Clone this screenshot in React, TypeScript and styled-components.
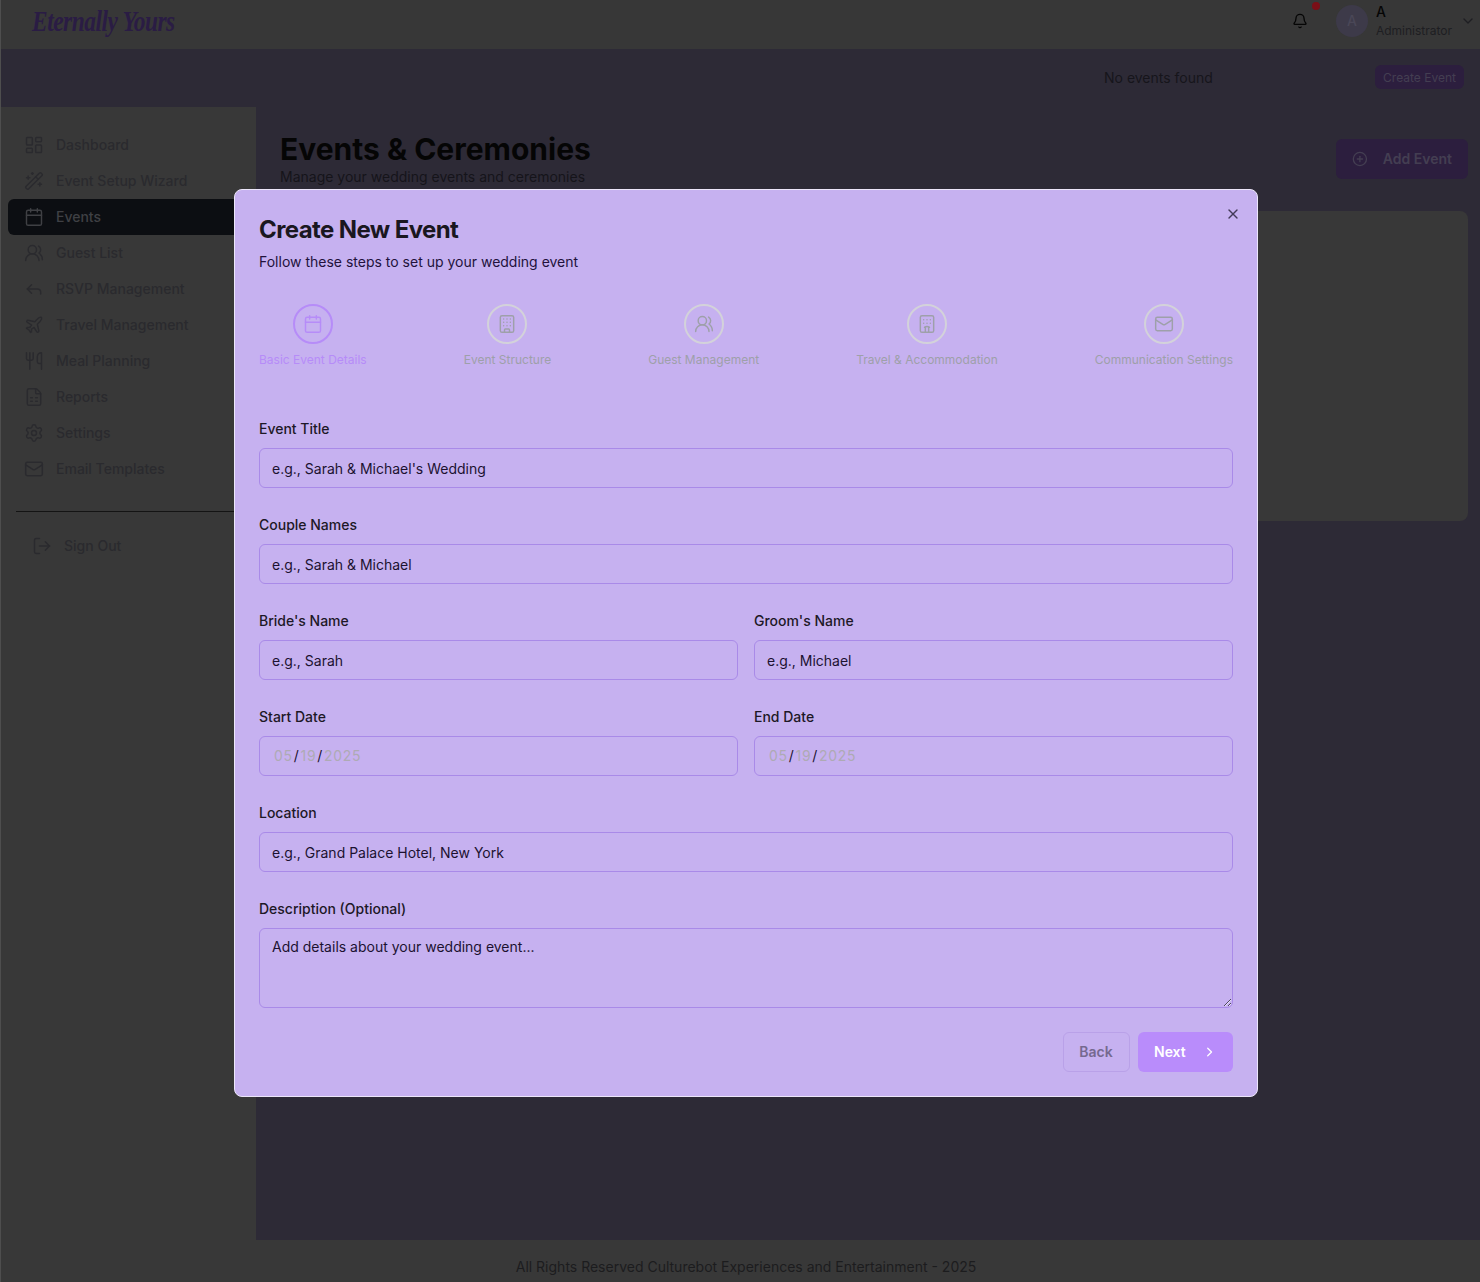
import React, { FC } from 'react';
import styled, { createGlobalStyle } from 'styled-components';
import {
  Bell,
  Building,
  Calendar,
  ChevronDown,
  ChevronRight,
  CirclePlus,
  FileSpreadsheet,
  Hotel,
  LayoutDashboard,
  LogOut,
  Mail,
  Plane,
  Reply,
  Settings,
  UsersRound,
  Utensils,
  WandSparkles,
  X,
} from 'lucide-react';

const GlobalStyle = createGlobalStyle`
  html, body {
    margin: 0;
    padding: 0;
    background: #2d2a36;
    font-family: Inter, "Liberation Sans", sans-serif;
  }
  * {
    box-sizing: border-box;
  }
`;

const Page = styled.div`
  position: relative;
  display: flex;
  flex-direction: column;
  width: 1480px;
  height: 1282px;
  overflow: hidden;
  background: #2d2a36;
  border-left: 1px solid #4e4e4e;
`;

const Header = styled.header`
  display: flex;
  align-items: center;
  height: 49px;
  flex-shrink: 0;
  background: #373737;
  padding: 0 4px 8px 31px;
`;

const LogoSlot = styled.div`
  flex: 1;
`;

const Logo = styled.div`
  font-family: "Liberation Serif", serif;
  font-style: italic;
  font-weight: 700;
  font-size: 30px;
  letter-spacing: -0.6px;
  color: #2a1c44;
  width: max-content;
  transform: scaleX(0.78);
  transform-origin: left center;
`;

const BellWrap = styled.div`
  position: relative;
  display: flex;
  color: #050505;
  margin-right: 28px;
`;

const Dot = styled.span`
  position: absolute;
  top: -11px;
  right: -12px;
  width: 8px;
  height: 8px;
  border-radius: 50%;
  background: #7a0f17;
`;

const Avatar = styled.div`
  width: 32px;
  height: 32px;
  border-radius: 50%;
  background: #3d3a49;
  color: #4a4757;
  font-size: 14px;
  font-weight: 500;
  display: flex;
  align-items: center;
  justify-content: center;
`;

const UserInfo = styled.div`
  display: flex;
  flex-direction: column;
  margin-left: 8px;
  margin-right: 8px;
`;

const UserName = styled.span`
  font-size: 14px;
  line-height: 18px;
  font-weight: 500;
  color: #050505;
`;

const UserRole = styled.span`
  font-size: 12px;
  line-height: 16px;
  margin-top: 2px;
  color: #1e1e22;
`;

const ChevronWrap = styled.div`
  display: flex;
  color: #1e1e22;
`;

const TopBand = styled.div`
  display: flex;
  align-items: center;
  height: 58px;
  flex-shrink: 0;
  padding: 0 16px 2px 0;
`;

const NoEvents = styled.span`
  font-size: 14px;
  color: #16151b;
  margin-left: 1103px;
  margin-right: auto;
`;

const SmallButton = styled.button`
  height: 24px;
  width: 89px;
  padding: 0;
  border: none;
  border-radius: 6px;
  background: #2c1e3e;
  color: #443e52;
  font-family: inherit;
  font-size: 12px;
`;

const Body = styled.div`
  display: flex;
  flex: 1;
  min-height: 0;
`;

const Sidebar = styled.nav`
  width: 255px;
  flex-shrink: 0;
  background: #383838;
  padding: 20px 8px 20px 7px;
`;

const NavItem = styled.div<{ $active?: boolean }>`
  display: flex;
  align-items: center;
  gap: 12px;
  height: 36px;
  padding-left: 16px;
  border-radius: 6px;
  font-size: 14px;
  font-weight: 500;
  color: ${(p) => (p.$active ? '#3f4044' : '#2a2a2e')};
  background: ${(p) => (p.$active ? '#0c0e12' : 'transparent')};
`;

const NavLabel = styled.span`
  padding-bottom: 2px;
`;

const Divider = styled.hr`
  height: 1px;
  border: none;
  background: #141414;
  margin: 24px 0 16px 8px;
`;

const SignOut = styled(NavItem)`
  padding-left: 24px;
`;

const Main = styled.main`
  flex: 1;
  padding: 24px 12px 0 24px;
`;

const MainHead = styled.div`
  display: flex;
  justify-content: space-between;
  align-items: flex-start;
`;

const PageTitle = styled.h1`
  margin: 0;
  font-size: 30px;
  line-height: 36px;
  font-weight: 700;
  color: #050505;
`;

const PageSub = styled.p`
  margin: 0;
  font-size: 14px;
  line-height: 20px;
  color: #15141a;
`;

const AddButton = styled.button`
  display: flex;
  align-items: center;
  gap: 15px;
  width: 132px;
  height: 40px;
  margin-top: 8px;
  padding: 0 16px 1px;
  border: none;
  border-radius: 6px;
  background: #2c1e3e;
  color: #443e52;
  font-family: inherit;
  font-size: 14px;
  font-weight: 600;
  white-space: nowrap;
`;

const EmptyCard = styled.div`
  height: 310px;
  margin-top: 24px;
  border-radius: 8px;
  background: #383838;
`;

const Footer = styled.footer`
  height: 42px;
  flex-shrink: 0;
  background: #383838;
  display: flex;
  align-items: flex-end;
  justify-content: center;
  padding: 0 0 5px 11px;
  font-size: 14px;
  line-height: 20px;
  color: #1c1c1e;
`;

const Overlay = styled.div`
  position: absolute;
  inset: 0;
  display: flex;
  align-items: center;
  justify-content: center;
  padding: 4px 0 0 11px;
`;

const Modal = styled.div`
  position: relative;
  width: 1024px;
  height: 908px;
  padding: 24px;
  background: #c6b1f0;
  border: 1px solid #ece6fa;
  border-radius: 8px;
`;

const CloseButton = styled.button`
  position: absolute;
  top: 16px;
  right: 16px;
  display: flex;
  padding: 0;
  border: none;
  background: none;
  color: #433a58;
`;

const ModalTitle = styled.h2`
  margin: 0;
  font-size: 24px;
  line-height: 32px;
  font-weight: 700;
  letter-spacing: -0.6px;
  color: #1a1720;
`;

const ModalSub = styled.p`
  margin: 6px 0 0;
  font-size: 14px;
  line-height: 20px;
  color: #22123c;
`;

const Stepper = styled.div`
  display: flex;
  justify-content: space-between;
  margin: 32px 0 51px;
`;

const Step = styled.div<{ $active?: boolean }>`
  display: flex;
  flex-direction: column;
  align-items: center;
  color: ${(p) => (p.$active ? '#b68cf8' : '#9ea0a9')};
`;

const StepCircle = styled.div<{ $active?: boolean }>`
  width: 40px;
  height: 40px;
  border-radius: 50%;
  border: 2px solid ${(p) => (p.$active ? '#b68cf8' : '#d3d2da')};
  display: flex;
  align-items: center;
  justify-content: center;
`;

const StepLabel = styled.span`
  margin-top: 8px;
  font-size: 12px;
  line-height: 16px;
`;

const Form = styled.form`
  display: flex;
  flex-direction: column;
  gap: 27px;
`;

const Row = styled.div`
  display: grid;
  grid-template-columns: 1fr 1fr;
  gap: 16px;
`;

const Field = styled.div`
  display: flex;
  flex-direction: column;
  gap: 9px;
`;

const Label = styled.label`
  font-size: 14px;
  line-height: 20px;
  font-weight: 500;
  color: #1d1826;
`;

const Input = styled.input`
  height: 40px;
  width: 100%;
  padding: 0 12px;
  border: 1px solid #a98ae8;
  border-radius: 6px;
  background: transparent;
  font-family: inherit;
  font-size: 14px;
  color: #1c1230;
  &::placeholder {
    color: #1c1230;
    opacity: 1;
  }
`;

const DateBox = styled.div`
  display: flex;
  align-items: center;
  height: 40px;
  padding: 0 14px 2px;
  border: 1px solid #a98ae8;
  border-radius: 6px;
  font-size: 14px;
  letter-spacing: 0.7px;
  color: #1c1230;
`;

const DatePart = styled.span`
  color: #aeaab4;
`;

const DateSep = styled.span`
  margin: 0 1px;
`;

const Textarea = styled.textarea`
  display: block;
  height: 80px;
  width: 100%;
  padding: 8px 12px;
  border: 1px solid #a98ae8;
  border-radius: 6px;
  background: transparent;
  font-family: inherit;
  font-size: 14px;
  line-height: 20px;
  color: #1c1230;
  &::placeholder {
    color: #1c1230;
    opacity: 1;
  }
`;

const Actions = styled.div`
  display: flex;
  justify-content: flex-end;
  gap: 8px;
  margin-top: 24px;
`;

const BackButton = styled.button`
  width: 67px;
  height: 40px;
  padding: 0 1px 2px 0;
  border: 1px solid #b9a1e8;
  border-radius: 6px;
  background: transparent;
  color: #75698f;
  font-family: inherit;
  font-size: 14px;
  font-weight: 600;
`;

const NextButton = styled.button`
  display: flex;
  align-items: center;
  gap: 16px;
  width: 95px;
  height: 40px;
  padding: 0 16px;
  border: none;
  border-radius: 6px;
  background: #b98cfb;
  color: #fff;
  font-family: inherit;
  font-size: 14px;
  font-weight: 600;
`;

const NextLabel = styled.span`
  padding-bottom: 2px;
`;

const navItems = [
  { label: 'Dashboard', icon: LayoutDashboard },
  { label: 'Event Setup Wizard', icon: WandSparkles },
  { label: 'Events', icon: Calendar, active: true },
  { label: 'Guest List', icon: UsersRound },
  { label: 'RSVP Management', icon: Reply },
  { label: 'Travel Management', icon: Plane },
  { label: 'Meal Planning', icon: Utensils },
  { label: 'Reports', icon: FileSpreadsheet },
  { label: 'Settings', icon: Settings },
  { label: 'Email Templates', icon: Mail },
];

const steps = [
  { label: 'Basic Event Details', icon: Calendar, active: true },
  { label: 'Event Structure', icon: Building },
  { label: 'Guest Management', icon: UsersRound },
  { label: 'Travel & Accommodation', icon: Hotel },
  { label: 'Communication Settings', icon: Mail },
];

const DateField: FC<{ label: string }> = ({ label }) => (
  <Field>
    <Label>{label}</Label>
    <DateBox>
      <DatePart>05</DatePart>
      <DateSep>/</DateSep>
      <DatePart>19</DatePart>
      <DateSep>/</DateSep>
      <DatePart>2025</DatePart>
    </DateBox>
  </Field>
);

const TextField: FC<{ label: string; placeholder: string }> = ({ label, placeholder }) => (
  <Field>
    <Label>{label}</Label>
    <Input placeholder={placeholder} />
  </Field>
);

const App: FC = () => {
  return (
    <Page>
      <GlobalStyle />
      <Header>
        <LogoSlot>
          <Logo>Eternally Yours</Logo>
        </LogoSlot>
        <BellWrap>
          <Bell size={16} />
          <Dot />
        </BellWrap>
        <Avatar>A</Avatar>
        <UserInfo>
          <UserName>A</UserName>
          <UserRole>Administrator</UserRole>
        </UserInfo>
        <ChevronWrap>
          <ChevronDown size={16} />
        </ChevronWrap>
      </Header>
      <TopBand>
        <NoEvents>No events found</NoEvents>
        <SmallButton>Create Event</SmallButton>
      </TopBand>
      <Body>
        <Sidebar>
          {navItems.map(({ label, icon: Icon, active }) => (
            <NavItem key={label} $active={active}>
              <Icon size={20} strokeWidth={1.75} />
              <NavLabel>{label}</NavLabel>
            </NavItem>
          ))}
          <Divider />
          <SignOut>
            <LogOut size={20} strokeWidth={1.75} />
            <NavLabel>Sign Out</NavLabel>
          </SignOut>
        </Sidebar>
        <Main>
          <MainHead>
            <div>
              <PageTitle>Events &amp; Ceremonies</PageTitle>
              <PageSub>Manage your wedding events and ceremonies</PageSub>
            </div>
            <AddButton>
              <CirclePlus size={16} />
              Add Event
            </AddButton>
          </MainHead>
          <EmptyCard />
        </Main>
      </Body>
      <Footer>All Rights Reserved Culturebot Experiences and Entertainment - 2025</Footer>
      <Overlay>
        <Modal>
          <CloseButton>
            <X size={16} />
          </CloseButton>
          <ModalTitle>Create New Event</ModalTitle>
          <ModalSub>Follow these steps to set up your wedding event</ModalSub>
          <Stepper>
            {steps.map(({ label, icon: Icon, active }) => (
              <Step key={label} $active={active}>
                <StepCircle $active={active}>
                  <Icon size={20} strokeWidth={1.75} />
                </StepCircle>
                <StepLabel>{label}</StepLabel>
              </Step>
            ))}
          </Stepper>
          <Form>
            <TextField label="Event Title" placeholder="e.g., Sarah & Michael's Wedding" />
            <TextField label="Couple Names" placeholder="e.g., Sarah & Michael" />
            <Row>
              <TextField label="Bride's Name" placeholder="e.g., Sarah" />
              <TextField label="Groom's Name" placeholder="e.g., Michael" />
            </Row>
            <Row>
              <DateField label="Start Date" />
              <DateField label="End Date" />
            </Row>
            <TextField label="Location" placeholder="e.g., Grand Palace Hotel, New York" />
            <Field>
              <Label>Description (Optional)</Label>
              <Textarea placeholder="Add details about your wedding event..." />
            </Field>
          </Form>
          <Actions>
            <BackButton type="button">Back</BackButton>
            <NextButton type="button">
              <NextLabel>Next</NextLabel>
              <ChevronRight size={16} />
            </NextButton>
          </Actions>
        </Modal>
      </Overlay>
    </Page>
  );
};

export default App;
